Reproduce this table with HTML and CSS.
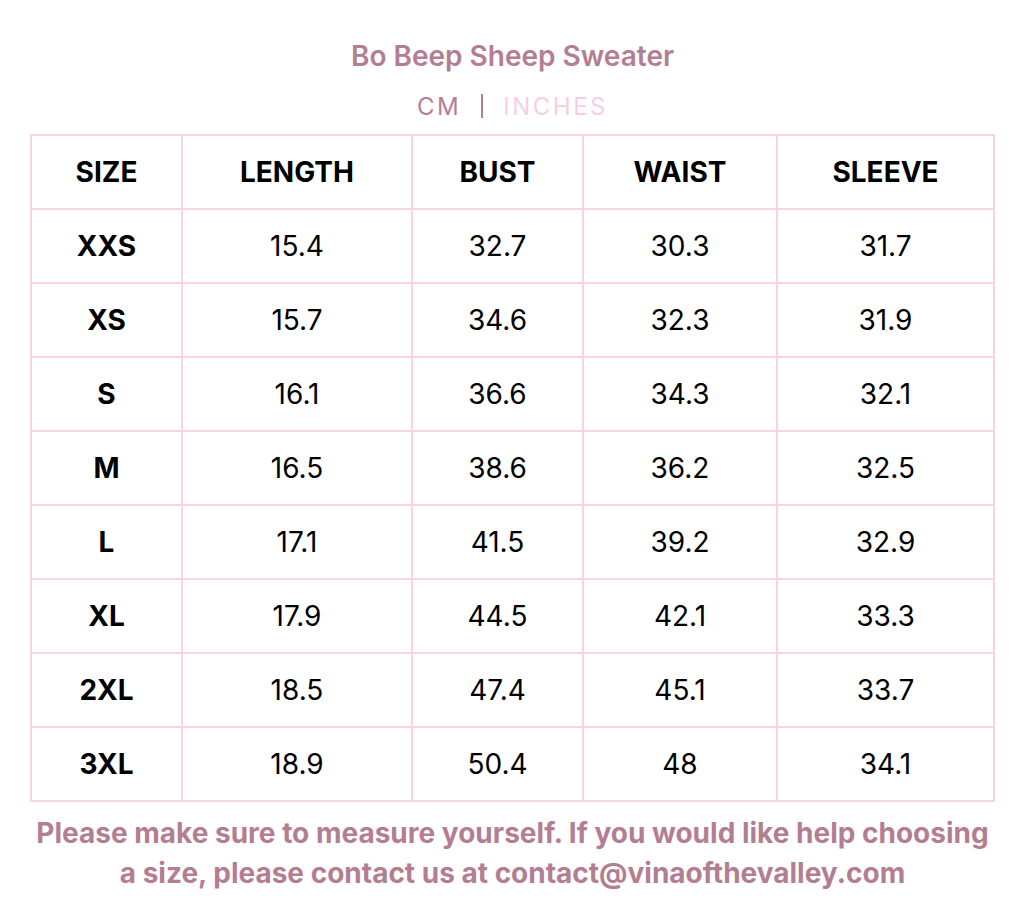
FILE: index.html
```html
<!DOCTYPE html>
<html lang="en">
<head>
<meta charset="utf-8">
<title>Bo Beep Sheep Sweater – Size Chart</title>
<link rel="stylesheet" href="styles.css">
</head>
<body>
<div class="page">
  <h1 class="title">Bo Beep Sheep Sweater</h1>
  <div class="units">
    <span class="unit active">CM</span>
    <span class="sep"></span>
    <span class="unit inactive">INCHES</span>
  </div>
  <table class="chart">
    <colgroup>
      <col class="c1"><col class="c2"><col class="c3"><col class="c4"><col class="c5">
    </colgroup>
    <thead>
      <tr><th>SIZE</th><th>LENGTH</th><th>BUST</th><th>WAIST</th><th>SLEEVE</th></tr>
    </thead>
    <tbody>
      <tr><th>XXS</th><td>15.4</td><td>32.7</td><td>30.3</td><td>31.7</td></tr>
      <tr><th>XS</th><td>15.7</td><td>34.6</td><td>32.3</td><td>31.9</td></tr>
      <tr><th>S</th><td>16.1</td><td>36.6</td><td>34.3</td><td>32.1</td></tr>
      <tr><th>M</th><td>16.5</td><td>38.6</td><td>36.2</td><td>32.5</td></tr>
      <tr><th>L</th><td>17.1</td><td>41.5</td><td>39.2</td><td>32.9</td></tr>
      <tr><th>XL</th><td>17.9</td><td>44.5</td><td>42.1</td><td>33.3</td></tr>
      <tr><th>2XL</th><td>18.5</td><td>47.4</td><td>45.1</td><td>33.7</td></tr>
      <tr><th>3XL</th><td>18.9</td><td>50.4</td><td>48</td><td>34.1</td></tr>
    </tbody>
  </table>
  <p class="note">Please make sure to measure yourself. If you would like help choosing a size, please contact us at contact@vinaofthevalley.com</p>
</div>
</body>
</html>
```

FILE: styles.css
```css
* { box-sizing: border-box; }
html, body { margin: 0; padding: 0; background: #ffffff; }
body {
  font-family: Inter, "Noto Sans", "Liberation Sans", sans-serif;
  color: #000;
}
.page {
  width: 1032px;
  padding: 39px 38px 0 31px;
  display: flex;
  flex-direction: column;
  align-items: center;
}
.title {
  margin: 0;
  font-size: 28px;
  line-height: 34px;
  font-weight: 600;
  color: #b47e92;
}
.units {
  margin-top: 20px;
  height: 26px;
  display: flex;
  align-items: center;
  gap: 20px;
  font-size: 24px;
  letter-spacing: 2.5px;
}
.unit.active { color: #b47e92; }
.unit.inactive { color: #f7cfe0; }
.sep {
  width: 2px;
  height: 24px;
  background: #b47e92;
}
.chart {
  margin-top: 15px;
  border-collapse: collapse;
  table-layout: fixed;
  width: 963px;
  border: 2px solid #f8d3e2;
}
.c1 { width: 151px; }
.c2 { width: 230px; }
.c3 { width: 171px; }
.c4 { width: 194px; }
.c5 { width: 217px; }
.chart th, .chart td {
  border: 2px solid #f8d3e2;
  height: 74px;
  padding: 0;
  text-align: center;
  vertical-align: middle;
  font-size: 28px;
}
.chart th { font-weight: 700; color: #000; }
.chart td { font-weight: 400; color: #000; }
.note {
  margin: 11px 0 0;
  width: 970px;
  text-align: center;
  font-size: 28px;
  line-height: 40px;
  font-weight: 700;
  color: #b47e92;
}
```
